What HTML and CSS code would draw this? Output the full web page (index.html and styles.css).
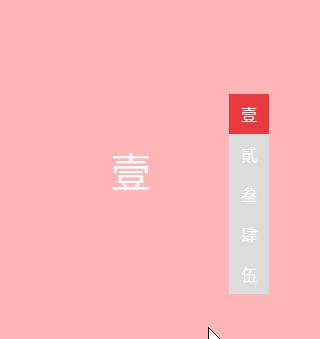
FILE: index.html
```html
<!DOCTYPE html>
<html lang="zh">
<head>
<meta charset="utf-8">
<link rel="stylesheet" href="styles.css">
</head>
<body>
<main class="stage">
  <div class="big">壹</div>
</main>
<nav class="side">
  <div class="item active">壹</div>
  <div class="item">貳</div>
  <div class="item">叁</div>
  <div class="item">肆</div>
  <div class="item">伍</div>
</nav>
<svg class="cursor" width="14" height="20" viewBox="0 0 14 20">
  <path d="M0.5 0.5 L0.5 17 L4.5 13 L7.5 19.5 L10 18.5 L7 12.5 L12.5 12.5 Z" fill="#fff" stroke="#000" stroke-width="1"/>
</svg>
</body>
</html>
```
FILE: styles.css
```css
html {
  background: #ffb6b6;
}
body {
  position: relative;
  margin: 0;
  padding: 0;
  width: 270px;
  height: 339px;
  overflow: hidden;
  background: #ffb6b6;
  font-family: "Noto Sans CJK SC", "Noto Sans", sans-serif;
}
.stage {
  height: 339px;
  display: flex;
  align-items: center;
  justify-content: center;
  padding-right: 8px;
  box-sizing: border-box;
}
.big {
  color: #ffffff;
  font-size: 40px;
  line-height: 1;
}
.side {
  position: absolute;
  top: 94px;
  right: 1px;
  width: 40px;
  background: #dcdcdc;
  display: flex;
  flex-direction: column;
}
.item {
  height: 40px;
  display: flex;
  align-items: center;
  justify-content: center;
  color: #ffffff;
  font-size: 16px;
}
.item.active {
  background: #e83a3e;
}
.cursor {
  position: absolute;
  left: 208px;
  top: 327px;
}
```
